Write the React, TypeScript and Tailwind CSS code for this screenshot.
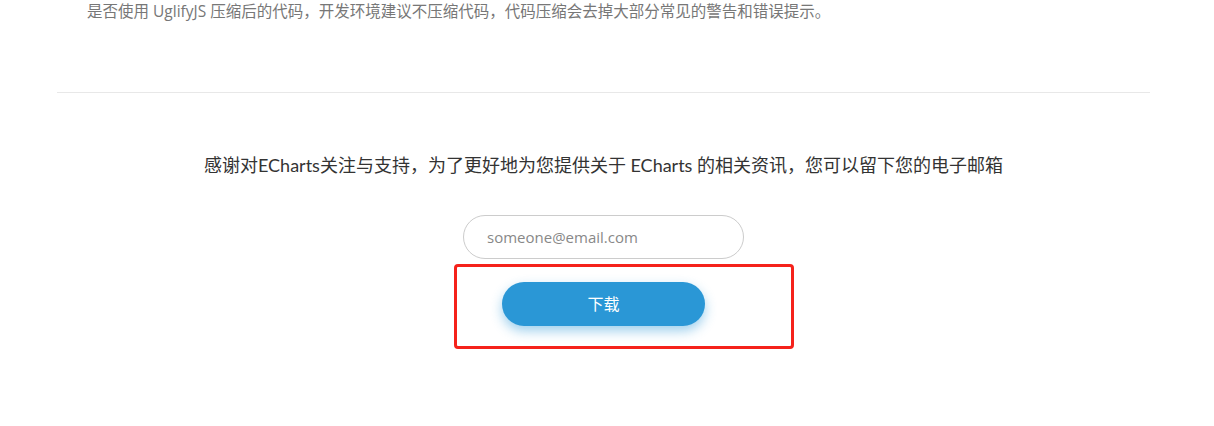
export default function App() {
  return (
    <div
      className="relative w-[1207px] h-[426px] bg-white overflow-hidden"
      style={{ fontFamily: '"Open Sans", "Noto Sans CJK SC", sans-serif' }}
    >
      <div className="mx-[57px] px-[30px] h-[93px] border-b border-[#e8e8e8]">
        <p className="text-[15.5px] leading-[22px] text-[#777]">
          是否使用 UglifyJS 压缩后的代码，开发环境建议不压缩代码，代码压缩会去掉大部分常见的警告和错误提示。
        </p>
      </div>

      <div className="flex flex-col items-center pt-[60px]">
        <p
          className="text-[18px] leading-[24px] text-[#333]"
          style={{ fontFamily: 'Lato, "Noto Sans CJK SC", sans-serif' }}
        >
          感谢对ECharts关注与支持，为了更好地为您提供关于 ECharts 的相关资讯，您可以留下您的电子邮箱
        </p>

        <input
          type="email"
          placeholder="someone@email.com"
          className="mt-[38px] w-[281px] h-[44px] rounded-full border border-[#ccc] px-[23px] text-[15px] text-[#555] placeholder:text-[#888] outline-none"
        />

        <button
          type="button"
          className="mt-[23px] w-[203px] h-[44px] rounded-full bg-[#2a97d6] text-white text-[16px] font-normal shadow-[0_5px_12px_rgba(42,151,214,0.45)]"
        >
          下载
        </button>
      </div>

      <div className="absolute left-[454px] top-[264px] w-[340px] h-[85px] border-[3px] border-[#f5221b] rounded-[4px] pointer-events-none" />
    </div>
  );
}
